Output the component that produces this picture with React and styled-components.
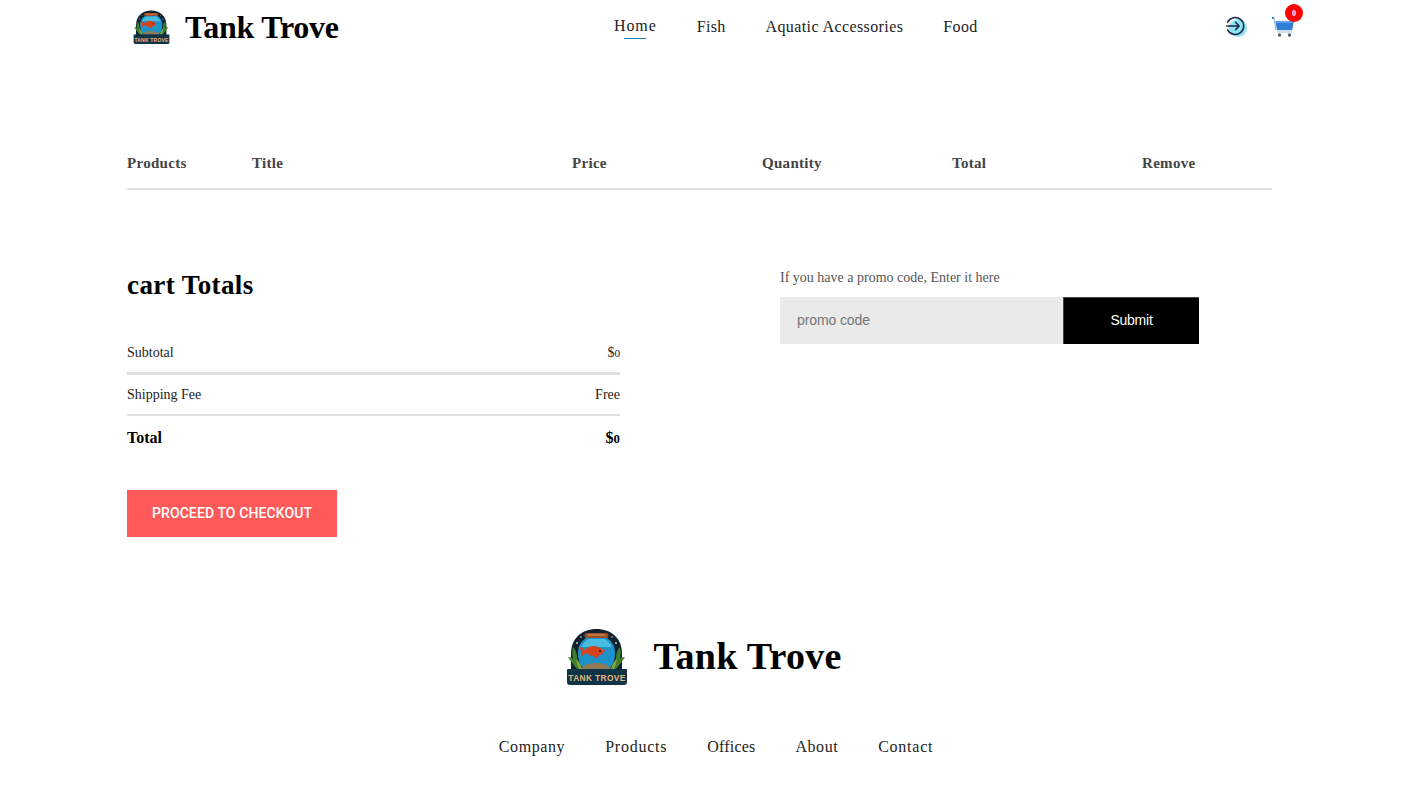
import React from "react";
import styled, { createGlobalStyle } from "styled-components";

const Global = createGlobalStyle`
  * { box-sizing: border-box; }
  html, body { margin: 0; padding: 0; background: #fff; }
  body { font-family: "Liberation Serif", "Times New Roman", serif; color: #000; overflow: hidden; }
`;

const Page = styled.div`
  width: 1403px;
  height: 796px;
  display: flex;
  flex-direction: column;
`;

const Header = styled.header`
  height: 54px;
  padding: 0 107px 0 127px;
  display: grid;
  grid-template-columns: 487px 1fr auto;
  align-items: center;
`;

const Brand = styled.div`
  display: flex;
  align-items: center;
  gap: ${(p) => p.$gap}px;
`;

const HeaderBrand = styled(Brand)`
  padding-left: 6px;
`;

const BrandName = styled.span`
  font-size: ${(p) => p.$size}px;
  font-weight: 700;
  letter-spacing: ${(p) => p.$spacing}px;
  line-height: 1;
  margin-bottom: ${(p) => p.$lift ?? 0}px;
  white-space: nowrap;
`;

const Nav = styled.nav`
  display: flex;
  gap: 40px;
`;

const NavLink = styled.a`
  position: relative;
  font-size: 16px;
  letter-spacing: ${(p) => p.$spacing}px;
  color: #222;
  white-space: nowrap;
  ${(p) => p.$active && `
    top: -1px;
    &::after {
      content: "";
      position: absolute;
      left: 10px;
      right: 11px;
      bottom: -4px;
      height: 1px;
      background: #1f7fb5;
    }
  `}
`;

const Icons = styled.div`
  display: flex;
  align-items: center;
  gap: 22px;
`;

const CartWrap = styled.div`
  position: relative;
  width: 24px;
  height: 24px;
`;

const Badge = styled.span`
  position: absolute;
  top: -11px;
  right: -7px;
  width: 18px;
  height: 18px;
  border-radius: 50%;
  background: #fe0000;
  color: #fff;
  font-size: 8px;
  font-weight: 700;
  display: flex;
  align-items: center;
  justify-content: center;
`;

const Main = styled.main`
  padding: 0 131px 0 127px;
  display: flex;
  flex-direction: column;
`;

const TableHead = styled.div`
  margin-top: 99px;
  height: 37px;
  border-bottom: 2px solid #e0e0e0;
  display: grid;
  grid-template-columns: 125px 320px 190px 190px 190px 1fr;
  align-items: start;
`;

const HeadCell = styled.div`
  font-size: 15px;
  line-height: 20px;
  font-weight: 700;
  letter-spacing: 0.3px;
  color: #444;
`;

const Lower = styled.div`
  margin-top: 76px;
  display: grid;
  grid-template-columns: 493px 419px;
  column-gap: 160px;
  align-items: start;
`;

const TotalsTitle = styled.h2`
  margin: 3px 0 0;
  font-size: 27px;
  line-height: 32px;
  font-weight: 700;
  letter-spacing: 0.4px;
`;

const TotalsList = styled.div`
  margin-top: 32px;
`;

const TotalsRow = styled.div`
  display: flex;
  justify-content: space-between;
  align-items: center;
  height: ${(p) => p.$h}px;
  font-size: ${(p) => (p.$strong ? 16 : 14)}px;
  font-weight: ${(p) => (p.$strong ? 700 : 400)};
  color: ${(p) => (p.$strong ? "#000" : "#222")};
`;

const Rule = styled.hr`
  margin: 0;
  border: 0;
  height: ${(p) => p.$h}px;
  background: #e0e0e0;
`;

const Zero = styled.span`
  font-size: 0.8em;
`;

const CheckoutButton = styled.button`
  margin-top: 31px;
  width: 210px;
  height: 47px;
  border: 0;
  padding: 0 0 2px;
  background: #ff5a5a;
  color: #fff;
  font-family: Roboto, sans-serif;
  font-size: 14px;
  font-weight: 500;
  letter-spacing: 0.1px;
  display: block;
`;

const PromoColumn = styled.div`
  padding-top: 3px;
`;

const PromoLabel = styled.p`
  margin: 0 0 11px;
  font-size: 14px;
  line-height: 17px;
  color: #555;
`;

const PromoForm = styled.form`
  display: flex;
  height: 47px;
`;

const PromoInput = styled.input`
  width: 283px;
  height: 100%;
  border: 0;
  outline: 0;
  padding: 0 17px 1px;
  background: #eaeaea;
  font-family: "Liberation Sans", Arial, sans-serif;
  font-size: 14px;
  letter-spacing: -0.1px;
  &::placeholder { color: #757575; opacity: 1; }
`;

const PromoSubmit = styled.button`
  width: 136px;
  height: 100%;
  border: 0;
  border-top: 1px solid #444;
  border-left: 1px solid #444;
  padding: 0 0 2px;
  background: #000;
  color: #fff;
  font-family: "Liberation Sans", Arial, sans-serif;
  font-size: 14px;
  letter-spacing: -0.25px;
`;

const Footer = styled.footer`
  margin-top: 91px;
  display: flex;
  flex-direction: column;
  align-items: center;
`;

const FooterBrand = styled(Brand)`
  margin-left: 5px;
`;

const FooterNav = styled(Nav)`
  margin: 52px 0 0 29px;
`;

const Logo = ({ width }) => (
  <svg width={width} height={(width * 58) / 62} viewBox="0 0 62 58" style={{ flex: "none", display: "block" }}>
    <path d="M5 42V26C5 10 16 1 30.5 1S56 10 56 26v16z" fill="#0e2230" />
    <circle cx="11" cy="15" r=".9" fill="#cfd8d8" />
    <circle cx="15" cy="9" r=".8" fill="#cfd8d8" />
    <circle cx="50" cy="15" r=".9" fill="#cfd8d8" />
    <circle cx="46" cy="9" r=".8" fill="#cfd8d8" />
    <path d="M22 9h17c6 3 10 8 10 16 0 7-2 12-6 16H18c-4-4-6-9-6-16 0-8 4-13 10-16z" fill="#1e93c9" />
    <path d="M15 19c2-4 5-7 8-8h15c3 1 6 4 8 8z" fill="#49bde0" />
    <path d="M21 5h19a2 2 0 0 1 0 5H21a2 2 0 0 1 0-5z" fill="#9c5029" />
    <path d="M22 7h17" stroke="#e09a5a" strokeWidth="1" />
    <path d="M13 19c3 0 4 2 6 3 3-4 9-5 13-3 3 1 5 3 7 3-1 2-2 4-5 5-2 1-3 4-5 4 0-1 0-2-1-3-3 0-5-1-8-3-2 1-3 3-5 4 0-3 1-6-2-10z" fill="#d8431f" />
    <circle cx="34" cy="23" r="1" fill="#2a0f08" />
    <path d="M15 41c2-4 8-6 15-6s13 2 15 6z" fill="#8e7a55" />
    <path d="M11 41c-4-5-7-9-9-12 3 0 4 1 5 2-1-4-1-8 0-12 3 3 4 7 4 11 1 3 2 6 3 11z" fill="#3f7f2c" />
    <path d="M50 41c4-5 7-9 9-12-3 0-4 1-5 2 1-4 1-8 0-12-3 3-4 7-4 11-1 3-2 6-3 11z" fill="#3f7f2c" />
    <path d="M13 41c-2-4-2-7-3-10 3 2 5 5 6 10zM48 41c2-4 2-7 3-10-3 2-5 5-6 10z" fill="#7ca83c" />
    <path d="M2 41h58a1 1 0 0 1 1 1v12a3 3 0 0 1-3 3H4a3 3 0 0 1-3-3V42a1 1 0 0 1 1-1z" fill="#0f3448" />
    <text x="31" y="53" textAnchor="middle" fontFamily="'Liberation Sans', sans-serif" fontWeight="700" fontSize="8.4" letterSpacing=".35" fill="#e8b67c">TANK TROVE</text>
  </svg>
);

const LoginIcon = () => (
  <svg width="24" height="24" viewBox="0 0 24 24" style={{ display: "block" }}>
    <circle cx="12" cy="13" r="9" fill="#8ee6f2" />
    <path d="M1.6 7.2A8.5 8.5 0 1 1 1.6 14.8" fill="none" stroke="#1d2550" strokeWidth="1.5" strokeLinecap="round" />
    <path d="M.8 11h12M9.6 7.4L13.2 11l-3.6 3.6" fill="none" stroke="#1d2550" strokeWidth="1.5" strokeLinecap="round" strokeLinejoin="round" />
  </svg>
);

const CartIcon = () => (
  <svg width="22" height="20" viewBox="0 0 22 20" style={{ display: "block", marginTop: "2px" }}>
    <rect x="0" y="0" width="2" height="2" fill="#2a86d8" />
    <path d="M2 1l2 12" stroke="#8fb4d8" strokeWidth="1" fill="none" />
    <path d="M3.4 4H22l-1.8 9H5z" fill="#2f7fd6" />
    <path d="M3.6 4H22l-.4 2H4z" fill="#5aa2ea" />
    <path d="M5 13h15.2l-.5 3H5.4z" fill="#cfe0f0" />
    <circle cx="7.5" cy="18" r="1.7" fill="#555f68" />
    <circle cx="17.5" cy="18" r="1.7" fill="#555f68" />
  </svg>
);

const heads = ["Products", "Title", "Price", "Quantity", "Total", "Remove"];
const navItems = [
  { label: "Home", active: true, spacing: 0.9 },
  { label: "Fish", spacing: 0.3 },
  { label: "Aquatic Accessories", spacing: 0.4 },
  { label: "Food", spacing: 0.4 },
];
const footerItems = [
  { label: "Company", spacing: 0.6 },
  { label: "Products", spacing: 0.75 },
  { label: "Offices", spacing: 0.2 },
  { label: "About", spacing: 0.55 },
  { label: "Contact", spacing: 0.75 },
];

export default function App() {
  return (
    <Page>
      <Global />
      <Header>
        <HeaderBrand $gap={15}>
          <Logo width={37} />
          <BrandName $size={32} $spacing={-0.25}>Tank Trove</BrandName>
        </HeaderBrand>
        <Nav>
          {navItems.map((n) => (
            <NavLink key={n.label} $active={n.active} $spacing={n.spacing}>{n.label}</NavLink>
          ))}
        </Nav>
        <Icons>
          <LoginIcon />
          <CartWrap>
            <CartIcon />
            <Badge>0</Badge>
          </CartWrap>
        </Icons>
      </Header>
      <Main>
        <TableHead>
          {heads.map((h) => <HeadCell key={h}>{h}</HeadCell>)}
        </TableHead>
        <Lower>
          <div>
            <TotalsTitle>cart Totals</TotalsTitle>
            <TotalsList>
              <TotalsRow $h={39}><span>Subtotal</span><span>$<Zero>0</Zero></span></TotalsRow>
              <Rule $h={3} />
              <TotalsRow $h={39}><span>Shipping Fee</span><span>Free</span></TotalsRow>
              <Rule $h={2} />
              <TotalsRow $h={43} $strong><span>Total</span><span>$<Zero>0</Zero></span></TotalsRow>
            </TotalsList>
            <CheckoutButton>PROCEED TO CHECKOUT</CheckoutButton>
          </div>
          <PromoColumn>
            <PromoLabel>If you have a promo code, Enter it here</PromoLabel>
            <PromoForm onSubmit={(e) => e.preventDefault()}>
              <PromoInput placeholder="promo code" />
              <PromoSubmit>Submit</PromoSubmit>
            </PromoForm>
          </PromoColumn>
        </Lower>
      </Main>
      <Footer>
        <FooterBrand $gap={25}>
          <Logo width={62} />
          <BrandName $size={38} $spacing={0.25} $lift={2}>Tank Trove</BrandName>
        </FooterBrand>
        <FooterNav>
          {footerItems.map((f) => <NavLink key={f.label} $spacing={f.spacing}>{f.label}</NavLink>)}
        </FooterNav>
      </Footer>
    </Page>
  );
}
